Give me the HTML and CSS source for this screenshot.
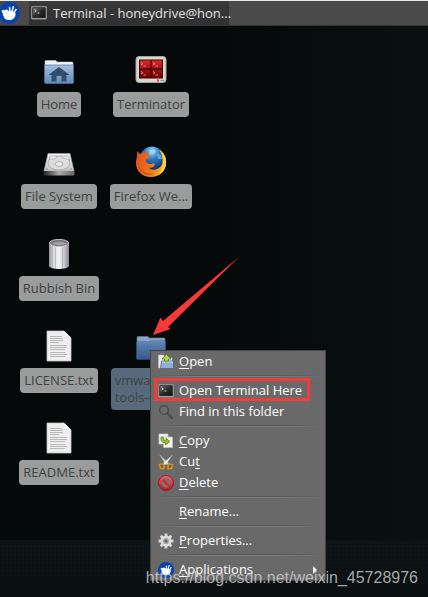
FILE: index.html
```html
<!DOCTYPE html>
<html lang="en">
<head>
<meta charset="utf-8">
<meta name="viewport" content="width=device-width, initial-scale=1">
<title>Desktop</title>
<link rel="stylesheet" href="styles.css">
</head>
<body>
<svg class="defs" width="0" height="0" aria-hidden="true">
  <defs>
    <linearGradient id="gFolder" x1="0" y1="0" x2="0" y2="1"><stop offset="0" stop-color="#5f86b4"/><stop offset="1" stop-color="#34588a"/></linearGradient>
    <linearGradient id="gHome" x1="0" y1="0" x2="0" y2="1"><stop offset="0" stop-color="#a3c0dd"/><stop offset="1" stop-color="#5f8ab8"/></linearGradient>
    <linearGradient id="gRed" x1="0" y1="0" x2="0" y2="1"><stop offset="0" stop-color="#d8282c"/><stop offset="1" stop-color="#6d0000"/></linearGradient>
    <linearGradient id="gDisk" x1="0" y1="0" x2="0" y2="1"><stop offset="0" stop-color="#f2f2f2"/><stop offset="1" stop-color="#c4c4c4"/></linearGradient>
    <linearGradient id="gEdge" x1="0" y1="0" x2="1" y2="0"><stop offset="0" stop-color="#222"/><stop offset=".5" stop-color="#aaa"/><stop offset="1" stop-color="#666"/></linearGradient>
    <linearGradient id="gBin" x1="0" y1="0" x2="1" y2="0"><stop offset="0" stop-color="#8f8f96"/><stop offset=".2" stop-color="#d8d8dc"/><stop offset=".5" stop-color="#f4f4f4"/><stop offset=".8" stop-color="#c2c2c8"/><stop offset="1" stop-color="#85858c"/></linearGradient>
    <radialGradient id="gGlobe" cx=".5" cy=".2" r=".8"><stop offset="0" stop-color="#9fdcf8"/><stop offset=".4" stop-color="#2c7cc4"/><stop offset="1" stop-color="#0b2a70"/></radialGradient>
    <linearGradient id="gFox" x1="0" y1=".3" x2="1" y2=".6"><stop offset="0" stop-color="#e0521c"/><stop offset=".6" stop-color="#ef7a1d"/><stop offset="1" stop-color="#fbc72c"/></linearGradient>
    <linearGradient id="gStop" x1="0" y1="0" x2="0" y2="1"><stop offset="0" stop-color="#ea6a72"/><stop offset="1" stop-color="#b5121c"/></linearGradient>
    <linearGradient id="gScreen" x1="0" y1="0" x2="1" y2="1"><stop offset="0" stop-color="#777"/><stop offset=".5" stop-color="#2c2c2c"/><stop offset="1" stop-color="#111"/></linearGradient>
    <symbol id="mouse" viewBox="0 0 22 22">
      <circle cx="11" cy="11" r="11" fill="#0844ac"/>
      <path d="M4 8.500C5 7.300 6.500 8 7 9C7 7.500 9 7 10 8.500L14 9.500C16.500 9 18 10.500 17.500 12.500C17.500 16 14.500 18 11 18C8 18 6 16.500 5.500 14C4.300 13 5 11.500 5.200 11C3.800 10.800 3.300 9.500 4 8.500Z" fill="#fff"/>
      <path d="M12 9.500L11.500 5.500M14 9.500L15.300 4.800M16 10.500L18 7.500" stroke="#fff" stroke-width="1.500" stroke-linecap="round"/>
    </symbol>
    <symbol id="terminal" viewBox="0 0 16 14">
      <rect x=".5" y=".5" width="15" height="12.500" rx=".5" fill="#b9b9b7" stroke="#8c8c8c"/>
      <rect x="1.700" y="1.700" width="12.600" height="10" fill="url(#gScreen)" stroke="#1a1a1a" stroke-width=".7"/>
      <path d="M3.500 3.500L5.300 4.800L3.500 6.200M6.500 7H8.500" fill="none" stroke="#ddd" stroke-width=".9"/>
    </symbol>
    <symbol id="page" viewBox="0 0 32 32">
      <path d="M4 1H21L28 8V31H4Z" fill="#eee" stroke="#c8c8c8" stroke-width=".8"/>
      <path d="M21 1C22 4 22 6 21 7.500C23 7 26 7 28 8.500Z" fill="#bdbdbd"/>
      <path d="M20 1C23 2 27 6 28 9C26 6.500 23 6.500 21 7C22 5 21.500 3 20 1Z" fill="#fff"/>
      <path d="M7 6.500H19M7 8.500H20M7 10.500H20M7 12.500H16M7 15.500H24M7 17.500H24M7 19.500H22M7 22.500H22M7 24.500H24M7 26.500H22" stroke="#b2b2b2" stroke-width=".9"/>
    </symbol>
  </defs>
</svg>

<header class="panel">
  <button class="panel-logo" aria-label="Applications"><svg width="22" height="22"><use href="#mouse"/></svg></button>
  <button class="task"><svg width="16" height="14"><use href="#terminal"/></svg><span>Terminal - honeydrive@hon...</span></button>
</header>

<main class="desktop">
  <div class="icons">
    <a class="item" href="#">
      <svg width="32" height="32" viewBox="0 0 32 32">
        <path d="M2 10V7.500Q2 6.500 3 6.500H13L14 8H29Q30 8 30 9V13H2Z" fill="#f1f1f1" stroke="#ccc" stroke-width=".5"/>
        <path d="M1.500 11H30.500V28.500Q30.500 29.500 29.500 29.500H2.500Q1.500 29.500 1.500 28.500Z" fill="url(#gHome)" stroke="#4f76a3" stroke-width=".7"/>
        <path d="M16 13L26 20.500V21H23.500V27.500H18.500V22H13.500V27.500H8.500V21H6V20.500Z" fill="#334e6b"/>
      </svg>
      <span class="label">Home</span>
    </a>
    <a class="item" href="#">
      <svg width="32" height="32" viewBox="0 0 32 32">
        <path d="M5 7.500H27L31 25H1Z" fill="url(#gDisk)" stroke="#aaa" stroke-width=".6"/>
        <path d="M.5 25H31.500V28.500Q31.500 29.500 30.500 29.500H1.500Q.5 29.500 .5 28.500Z" fill="url(#gEdge)"/>
        <ellipse cx="16" cy="17" rx="11" ry="7" fill="#ddd" stroke="#a5a5a5" stroke-width=".8"/>
        <ellipse cx="16" cy="18" rx="4" ry="2.300" fill="#eee" stroke="#a0a0a0" stroke-width=".8"/>
        <path d="M7 10H14L12 13H6Z" fill="#eee" stroke="#aaa" stroke-width=".7"/>
        <path d="M18 10H25L27 14L20 12Z" fill="#e6e6e6" stroke="#b0b0b0" stroke-width=".7"/>
        <circle cx="4" cy="23" r=".7" fill="#777"/><circle cx="28" cy="23" r=".7" fill="#777"/>
      </svg>
      <span class="label">File System</span>
    </a>
    <a class="item" href="#">
      <svg width="32" height="32" viewBox="0 0 32 32">
        <path d="M6 5V28C7 32 25 32 26 28V5Z" fill="url(#gBin)"/>
        <path d="M9.500 9V29M12.500 9.500V30M19.500 9.500V30M22.500 9V29" stroke="#b0b0b8" stroke-width=".8"/>
        <ellipse cx="16" cy="5" rx="9.600" ry="3.600" fill="#77777d" stroke="#cfcfd2" stroke-width=".9"/>
        <path d="M8 5.500Q16 2 24 5.500Q16 9 8 5.500Z" fill="#a1a1a6"/>
      </svg>
      <span class="label">Rubbish Bin</span>
    </a>
    <a class="item" href="#"><svg width="32" height="32"><use href="#page"/></svg><span class="label">LICENSE.txt</span></a>
    <a class="item" href="#"><svg width="32" height="32"><use href="#page"/></svg><span class="label">README.txt</span></a>
    <a class="item" href="#">
      <svg width="32" height="32" viewBox="0 0 32 32">
        <rect x="1" y="2.500" width="30" height="26" rx="3" fill="#d9d7cf" stroke="#a5a39b"/>
        <rect x="4" y="5.500" width="24" height="19" fill="#4a0505"/>
        <path d="M5 6.500H15.500V14.500H5ZM16.800 6.500H27V14.500H16.800ZM5 16H15.500V23.500H5ZM16.800 16H27V23.500H16.800Z" fill="url(#gRed)"/>
        <path d="M6 8.500L8 9.800L6 11M8.500 12H11M18 8.500L20 9.800L18 11M20.500 12H23M6 17.500L8 18.800L6 20M8.500 21H11M18 17.500L20 18.800L18 20M20.500 21H23" fill="none" stroke="#f0a0a0" stroke-width=".8"/>
        <path d="M22 26.500H24" stroke="#f22" stroke-width="1.800"/><path d="M25.500 26.500H29" stroke="#8f8d86" stroke-width="1.200"/>
      </svg>
      <span class="label">Terminator</span>
    </a>
    <a class="item" href="#">
      <svg width="32" height="32" viewBox="0 0 32 32">
        <circle cx="17" cy="12.500" r="12" fill="url(#gGlobe)"/>
        <path d="M14 5L18 3L21 5L19 8L15 9ZM22 8L26 9L27 13L23 13Z" fill="#b7e2f5" opacity=".45"/>
        <path d="M2 5L5 8C6.500 6.500 9 6.500 10.500 7L13 5L13.500 9.500C15 10.500 14.500 12.500 11.500 13C10 14.500 11.500 17 14 18C17 18.500 18.500 16 20 18C19.500 21 16.500 22.500 13.500 21.500C18 26 26 23 27.500 17C28.500 12 27 7 24.500 4C29 6.500 31.500 12 31 18C30 26 24 31 16 31C7 31 1 25 1 17C1 13 2.500 11 2 5Z" fill="url(#gFox)"/>
        <path d="M24.500 4C29 6.500 32 12 31 18C30.500 23 27 27 24 28.500C28 23 30 12 24.500 4Z" fill="#fdd336"/>
        <path d="M3 17C5 25 12 29 21 27C13 32 3 27 3 17Z" fill="#c9400f" opacity=".6"/>
      </svg>
      <span class="label">Firefox We...</span>
    </a>
    <a class="item item-folder" href="#">
      <svg width="32" height="32" viewBox="0 0 32 32">
        <path d="M2 14V7.500Q2 6.500 3 6.500H13L14 8H29Q30 8 30 9V14Z" fill="#8aa5c2" stroke="#5b7898" stroke-width=".7"/>
        <path d="M1.500 12H14.500L16 11H30.500V28.500Q30.500 29.500 29.500 29.500H2.500Q1.500 29.500 1.500 28.500Z" fill="url(#gFolder)" stroke="#2d4d78" stroke-width=".7"/>
        <path d="M2 12.800H15L16.500 11.700H30" fill="none" stroke="#7598c0" stroke-width=".7"/>
      </svg>
      <span class="label selected">vmware-<br>tools-distrib</span>
    </a>
  </div>

  <svg class="arrow" width="88" height="80" viewBox="0 0 88 80" aria-hidden="true"><path d="M1 79L8.500 61.500L11 65L88 0L16 71L18.500 73Z" fill="#fb3838"/></svg>

  <div class="menu" role="menu">
    <button role="menuitem">
      <svg width="16" height="16" viewBox="0 0 16 16"><path d="M.5 1H6V4H14V14H.5Z" fill="#eee" stroke="#bbb" stroke-width=".6"/><path d="M3.500 7H15.500V14.500H2.500Z" fill="#8fb0d4" stroke="#40658f" stroke-width=".8"/><path d="M4 8H15" stroke="#d2e0ef" stroke-width=".8"/><path d="M8.500 .5L13 5H10.500V7H6.500V5H4Z" fill="#b5d84a" stroke="#5b8a12" stroke-width=".9"/></svg>
      <span><u>O</u>pen</span>
    </button>
    <hr>
    <button role="menuitem" class="marked"><svg width="16" height="14"><use href="#terminal"/></svg><span>Open Terminal Here</span></button>
    <button role="menuitem">
      <svg width="16" height="16" viewBox="0 0 16 16"><circle cx="6" cy="6" r="4.300" fill="#6e6e6e" stroke="#4c4c4c" stroke-width="1.600"/><path d="M9.500 9.500L14 14" stroke="#4c4c4c" stroke-width="2.400" stroke-linecap="round"/></svg>
      <span>Find in this folder</span>
    </button>
    <hr>
    <button role="menuitem">
      <svg width="16" height="16" viewBox="0 0 16 16"><path d="M1 1H10V11H1Z" fill="#f3f3f3" stroke="#ccc" stroke-width=".7"/><path d="M5.500 4H14.500V14.500H5.500Z" fill="#f6f6f6" stroke="#bbb" stroke-width=".8"/><path d="M3 4C2.500 8 4 10 7.500 9.800V12L12 8.500L8 5.300V7.300C6 7.500 5 6.500 5.300 4Z" fill="#8fc22f" stroke="#55850f" stroke-width=".7"/></svg>
      <span><u>C</u>opy</span>
    </button>
    <button role="menuitem">
      <svg width="16" height="16" viewBox="0 0 16 16"><path d="M1.800 1L11 9.500L9 11L7 9Z" fill="#ddd" stroke="#aaa" stroke-width=".5"/><path d="M14.200 1L5 9.500L7 11L9 9Z" fill="#f4f4f4" stroke="#aaa" stroke-width=".5"/><path d="M1.500 10.500L5.500 9.800L6.200 14.500H2.500ZM14.500 10.500L10.500 9.800L9.800 14.500H13.500Z" fill="#6b5a35" stroke="#d9921c" stroke-width="1.600" stroke-linejoin="round"/></svg>
      <span>Cu<u>t</u></span>
    </button>
    <button role="menuitem">
      <svg width="16" height="16" viewBox="0 0 16 16"><circle cx="8" cy="8" r="7.500" fill="url(#gStop)" stroke="#9b121b" stroke-width=".8"/><circle cx="8" cy="8" r="4.700" fill="#817072"/><path d="M4.500 4.500L11.500 11.500" stroke="#cc2b35" stroke-width="2.400"/></svg>
      <span><u>D</u>elete</span>
    </button>
    <hr>
    <button role="menuitem"><i class="blank"></i><span><u>R</u>ename...</span></button>
    <hr>
    <button role="menuitem">
      <svg width="16" height="16" viewBox="0 0 16 16"><path d="M8 .5V15.500M.5 8H15.500M2.700 2.700L13.300 13.300M13.300 2.700L2.700 13.300" stroke="#d8d8d8" stroke-width="2.800"/><circle cx="8" cy="8" r="4.300" fill="#a5a5a5" stroke="#dedede" stroke-width="2.400"/><circle cx="8" cy="8" r="1.600" fill="#696969"/></svg>
      <span><u>P</u>roperties...</span>
    </button>
    <hr>
    <button role="menuitem" aria-haspopup="true">
      <svg width="16" height="16"><use href="#mouse"/></svg>
      <span><u>A</u>pplications</span>
      <svg class="more" width="4" height="8" viewBox="0 0 4 8"><path d="M0 0L4 4L0 8Z" fill="#eee"/></svg>
    </button>
  </div>
  <p class="watermark">https://blog.csdn.net/weixin_45728976</p>
</main>
</body>
</html>
```
FILE: styles.css
```css
* { box-sizing: border-box; }

body {
  margin: 0;
  min-height: 100vh;
  display: flex;
  flex-direction: column;
  background: #060a0a;
  font: 13px/17px "Open Sans", "Noto Sans", sans-serif;
}

svg { display: block; flex: none; }
.defs { position: absolute; }

button {
  margin: 0;
  padding: 0;
  border: 0;
  background: none;
  color: inherit;
  font: inherit;
  text-align: left;
}

.panel {
  display: flex;
  height: 26px;
  border-top: 1px solid #e9eeec;
  border-bottom: 1px solid #333;
  background: #4a4a4a;
  color: #e2e2e2;
}

.panel-logo {
  width: 29px;
  overflow: hidden;
}

.panel-logo svg { margin-left: -2px; }

.task {
  display: flex;
  align-items: center;
  gap: 6px;
  width: 200px;
  padding: 0 2px;
  background: linear-gradient(#3a3a3a, #303030);
  white-space: nowrap;
}

.desktop {
  position: relative;
  flex: 1;
  overflow: hidden;
  background:
    repeating-linear-gradient(0deg, #080c0d50 0 1px, transparent 1px 4px) bottom / 100% 57px no-repeat,
    repeating-linear-gradient(90deg, #080c0d50 0 1px, transparent 1px 4px) bottom / 100% 57px no-repeat,
    linear-gradient(#0f1516, #0b1112) bottom / 100% 57px no-repeat,
    linear-gradient(90deg, #050909 50%, #0b1011);
}

.icons {
  display: grid;
  grid-auto-flow: column;
  grid-template-rows: repeat(5, 92px);
  grid-auto-columns: 92px;
  padding: 28px 13px;
}

.item {
  display: flex;
  flex-direction: column;
  align-items: center;
  gap: 6px;
  color: #424242;
  text-decoration: none;
  white-space: nowrap;
}

.item-folder { grid-row: 4; }

.label {
  padding: 4px;
  border-radius: 4px;
  background: #9a9b9b;
}

.selected {
  background: #566a7b;
}

.arrow {
  position: absolute;
  left: 152px;
  top: 230px;
}

.menu {
  position: absolute;
  left: 150px;
  top: 324px;
  width: 176px;
  display: flex;
  flex-direction: column;
  border: 1px solid #444;
  background: #696969;
  color: #fff;
}

.menu button {
  position: relative;
  display: flex;
  align-items: center;
  gap: 5px;
  height: 21px;
  padding: 0 8px 0 7px;
}

.menu .blank { width: 16px; }
.menu .more { margin-left: auto; }

.menu u {
  text-decoration-thickness: 1px;
  text-underline-offset: 2px;
}

.menu hr {
  width: 168px;
  height: 2px;
  margin: 3px auto;
  border: 0;
  background:
    linear-gradient(90deg, transparent, #585858 25% 75%, transparent) top / 100% 1px no-repeat,
    linear-gradient(90deg, transparent, #7d7d7d 25% 75%, transparent) bottom / 100% 1px no-repeat;
}

.marked::after {
  content: "";
  position: absolute;
  inset: -2px 15px 0 3px;
  border: 3px solid #fb3838;
}

.watermark {
  position: absolute;
  right: 10px;
  bottom: 10px;
  margin: 0;
  color: #d0d0d0cc;
  font: 16px/18px "Liberation Sans", sans-serif;
}
```
